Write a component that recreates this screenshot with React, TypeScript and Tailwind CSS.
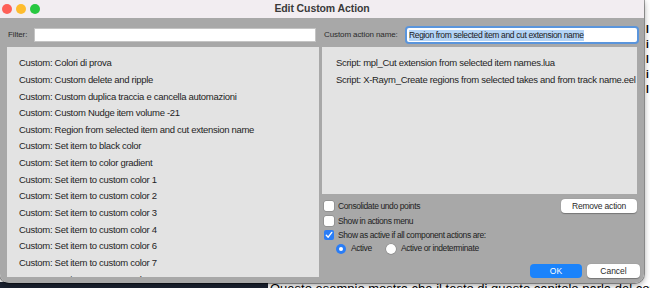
import React from "react";

const actions = [
  "Custom: Colori di prova",
  "Custom: Custom delete and ripple",
  "Custom: Custom duplica traccia e cancella automazioni",
  "Custom: Custom Nudge item volume -21",
  "Custom: Region from selected item and cut extension name",
  "Custom: Set item to black color",
  "Custom: Set item to color gradient",
  "Custom: Set item to custom color 1",
  "Custom: Set item to custom color 2",
  "Custom: Set item to custom color 3",
  "Custom: Set item to custom color 4",
  "Custom: Set item to custom color 6",
  "Custom: Set item to custom color 7",
  "Custom: Set item to custom color 8",
];

const scripts = [
  "Script: mpl_Cut extension from selected item names.lua",
  "Script: X-Raym_Create regions from selected takes and from track name.eel",
];

const Checkbox = ({ checked }: { checked?: boolean }) =>
  checked ? (
    <div className="w-[10px] h-[10px] rounded-[2px] bg-[#2a7df6] flex items-center justify-center">
      <svg width="8" height="8" viewBox="0 0 8 8">
        <path d="M1.3 4.2 L3.2 6.2 L6.8 1.4" fill="none" stroke="white" strokeWidth="1.4" strokeLinecap="round" strokeLinejoin="round" />
      </svg>
    </div>
  ) : (
    <div className="w-[10px] h-[10px] rounded-[2px] bg-white shadow-[0_0_0_0.5px_rgba(0,0,0,0.25)]" />
  );

const Radio = ({ checked }: { checked?: boolean }) =>
  checked ? (
    <div className="w-[10px] h-[10px] rounded-full bg-[#2a7df6] flex items-center justify-center">
      <div className="w-[4px] h-[4px] rounded-full bg-white" />
    </div>
  ) : (
    <div className="w-[10px] h-[10px] rounded-full bg-white shadow-[0_0_0_0.5px_rgba(0,0,0,0.25)]" />
  );

const App = () => {
  return (
    <div className="relative w-[650px] h-[288px] overflow-hidden bg-white font-['Liberation_Sans',Arial,sans-serif] text-[9.5px] tracking-[-0.3px] text-[#1e1e1e]">
      {/* desktop behind the window */}
      <div className="absolute left-[646px] top-[22px] flex flex-col text-[10px] leading-[15px] text-black font-bold tracking-normal">
        <span>I</span>
        <span>i</span>
        <span>l</span>
        <span>i</span>
        <span>l</span>
      </div>
      <div className="absolute left-0 top-[282px] w-[268px] h-[6px] bg-[#1b2231]" />
      <div className="absolute left-[270px] top-[281px] text-[13px] leading-[15px] text-black whitespace-nowrap tracking-normal">
        Questo esempio mostra che il testo di questo capitolo parla del consolidamento
      </div>

      {/* window */}
      <div className="absolute left-0 top-0 w-[644px] h-[283px] rounded-b-[9px] overflow-hidden flex flex-col shadow-[0_0_0_1px_rgba(0,0,0,0.35),0_2px_6px_rgba(0,0,0,0.4)]">
        <div className="relative h-[18px] bg-[#f2edf1] flex items-center shrink-0">
          <div className="flex gap-[4px] pl-[2px]">
            <div className="w-[10px] h-[10px] rounded-full bg-[#fe5f57]" />
            <div className="w-[10px] h-[10px] rounded-full bg-[#febc2e]" />
            <div className="w-[10px] h-[10px] rounded-full bg-[#28c840]" />
          </div>
          <div className="absolute inset-0 flex items-center justify-center font-bold text-[10.5px] tracking-[-0.1px] text-[#3a3a3a]">
            Edit Custom Action
          </div>
        </div>

        <div className="flex-1 bg-[#a8a8a8] px-[7px] pt-[10px] flex gap-[3px]">
          {/* left column */}
          <div className="w-[313px] flex flex-col">
            <div className="h-[14px] flex items-center">
              <span className="w-[27px] pl-[1px] text-[8px] tracking-[-0.1px] text-[#2b2b2b]">Filter:</span>
              <div className="w-[282px] h-[14px] bg-white shadow-[inset_0_0_0_1px_#c4c4c4]" />
            </div>
            <div className="mt-[5px] h-[230px] bg-[#e3e3e3] pl-[12px] pt-[8px] overflow-hidden">
              {actions.map((a) => (
                <div key={a} className="h-[16.67px] flex items-center whitespace-nowrap">
                  {a}
                </div>
              ))}
            </div>
          </div>

          {/* right column */}
          <div className="w-[315px] flex flex-col">
            <div className="h-[14px] flex items-center">
              <span className="w-[85px] pl-[2px] text-[8px] tracking-[-0.1px] text-[#2b2b2b] whitespace-nowrap">Custom action name:</span>
              <div className="w-[230px] h-[14px] bg-white rounded-[2px] shadow-[0_0_0_2px_#5a95dc] flex items-center pl-[2px] overflow-hidden">
                <span className="bg-[#b4d4f6] text-[8.5px] tracking-[-0.35px] leading-[11px] whitespace-nowrap text-[#1a1a1a]">
                  Region from selected item and cut extension name
                </span>
              </div>
            </div>
            <div className="mt-[5px] h-[147px] bg-[#e3e3e3] pl-[14px] pt-[8px] overflow-hidden">
              {scripts.map((s) => (
                <div key={s} className="h-[16.67px] flex items-center whitespace-nowrap">
                  {s}
                </div>
              ))}
            </div>

            <div className="text-[8.5px] tracking-[-0.4px] flex flex-col">
              <div className="mt-[5px] h-[14px] flex items-center justify-between">
                <div className="flex items-center gap-[4px] pl-[2px]">
                  <Checkbox />
                  <span>Consolidate undo points</span>
                </div>
                <button className="w-[76px] h-[14px] rounded-[4px] bg-white text-[8.5px] tracking-[-0.2px] text-[#2a2a2a] shadow-[0_0.5px_1px_rgba(0,0,0,0.3)]">
                  Remove action
                </button>
              </div>
              <div className="mt-[1px] h-[14px] flex items-center gap-[4px] pl-[2px]">
                <Checkbox />
                <span>Show in actions menu</span>
              </div>
              <div className="h-[14px] flex items-center gap-[4px] pl-[2px]">
                <Checkbox checked />
                <span>Show as active if all component actions are:</span>
              </div>
              <div className="h-[13px] flex items-center pl-[14px]">
                <div className="w-[50px] flex items-center gap-[5px]">
                  <Radio checked />
                  <span>Active</span>
                </div>
                <div className="flex items-center gap-[5px]">
                  <Radio />
                  <span>Active or indeterminate</span>
                </div>
              </div>
              <div className="mt-[9px] h-[14px] flex justify-end gap-[5px] -mr-[3px]">
                <button className="w-[52px] h-[14px] rounded-[4px] bg-[#1b83fb] text-white text-[8.5px] tracking-normal">
                  OK
                </button>
                <button className="w-[53px] h-[14px] rounded-[4px] bg-white text-[8.5px] tracking-normal text-[#2a2a2a] shadow-[0_0.5px_1px_rgba(0,0,0,0.3)]">
                  Cancel
                </button>
              </div>
            </div>
          </div>
        </div>
      </div>
    </div>
  );
};

export default App;
